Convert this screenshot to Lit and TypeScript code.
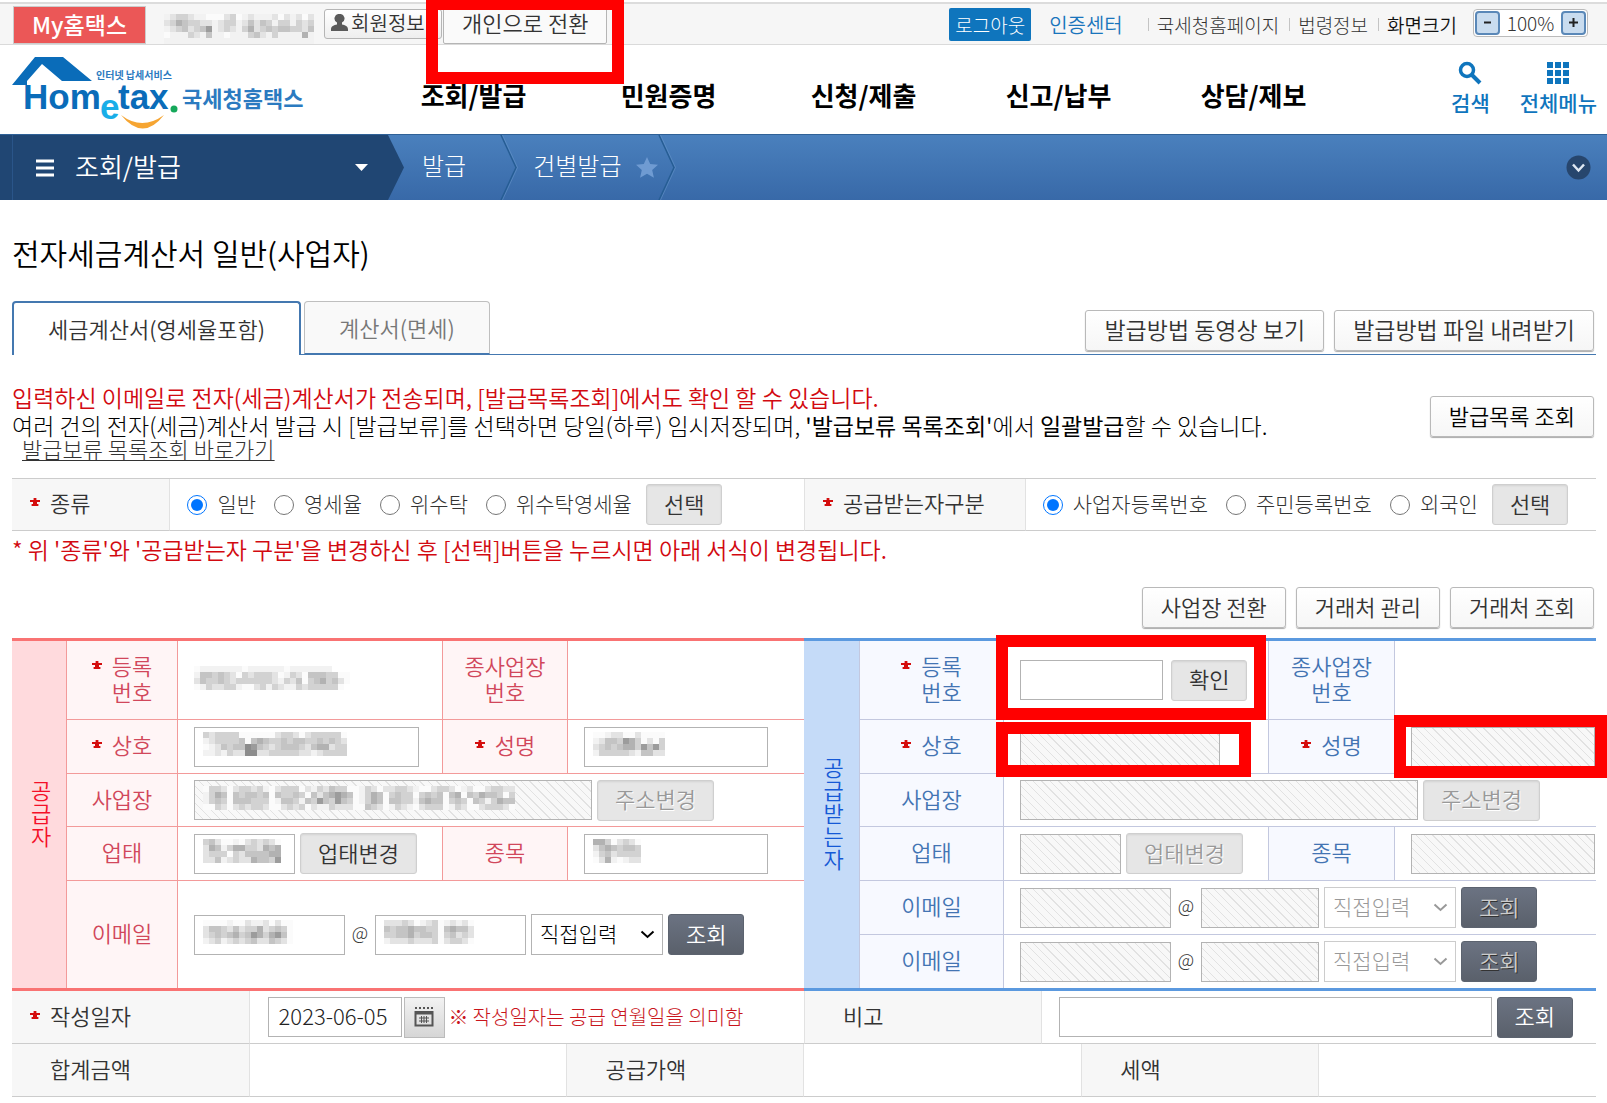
import { LitElement, html, svg, css, nothing, TemplateResult } from "lit";
import { customElement } from "lit/decorators.js";

/* Each digit is the darkness of one 6px cell; a space leaves the cell clear. */
const MASKS: Record<string, string[]> = {
  account: [
    "1233211000230121112021202",
    "2354332212331242431331323",
    "1234234612321352343443324",
    "0111321411011134213111151",
    "1111111111111111111111111",
  ],
  number: [
    "01111111011111101111111",
    "14434320323332013204443300",
    "24334323333332132403453420",
    "0132233100231321132333330",
  ],
  company: [
    "323333000000233202333330",
    "123333404543343443343432",
    "012434476432344432455233",
    "112132277223333322123333",
  ],
  address: [
    "0332023323102333021324330013202233210023320120023322",
    "1354043443404334304245654013540343303434045043544303",
    "1343044433301443143643643013540443314544034304313544",
    "0032023233200232302113222004320132102333013200233320",
  ],
  trade: ["3420010232320", "2541355332545", "2333032444455", "2241232254436"],
  owner: ["001220020000", "124436530203", "234345536463", "133333214422"],
  item: ["55302320", "24543443", "13423333", "02510122"],
  mail: ["000010021120200", "244324233523430", "234345346535640", "123123234224320"],
  domain: ["222320123012120", "434454433045442", "334453443034232", "122232223023320"],
};

const SHADES = ["#fbfbfb", "#f2f2f2", "#e3e3e3", "#d2d2d2", "#c4c4c4", "#b2b2b2", "#9c9c9c", "#8c8c8c"];

function mask(name: string): TemplateResult {
  const rows = MASKS[name];
  const width = Math.max(...rows.map((r) => r.length)) * 6;
  return html`<svg class="mask" width=${width} height=${rows.length * 6} aria-hidden="true" shape-rendering="crispEdges">
    ${rows.map((row, y) =>
      [...row].map((c, x) =>
        c === " " ? nothing : svg`<rect x=${x * 6} y=${y * 6} width="6" height="6" fill=${SHADES[Number(c)]}></rect>`
      )
    )}
  </svg>`;
}

const star = html`<svg class="star" width="10" height="9" viewBox="0 0 10 9" aria-hidden="true">
  <path d="M3.6 0h2.8v2H10v2H7v2h1.4v2H1.6V6H3V4H0V2h3.6z" fill="#d40d0d" />
</svg>`;

const chevron = html`<svg class="chevron" width="15" height="9" viewBox="0 0 15 9" aria-hidden="true">
  <path d="M1.5 1.5 7.5 7l6-5.5" fill="none" stroke="currentColor" stroke-width="2" />
</svg>`;

const label = (first: string, second = "", required = false) =>
  html`<span class="label">${required ? star : nothing}<span>${first}${second ? html`<br />${second}` : nothing}</span></span>`;

const field = (name: string, size: string, disabled = false, masked = "") => html`<span class="field ${size}">
  <input type="text" aria-label=${name} ?disabled=${disabled} />${masked ? mask(masked) : nothing}
</span>`;

const domainSelect = (name: string, disabled = false) => html`<span class="select">
  <select aria-label=${name} ?disabled=${disabled}>
    <option>직접입력</option>
  </select>${chevron}
</span>`;

@customElement("app-root")
export class AppRoot extends LitElement {
  static styles = css`
    :host {
      display: block;
      position: relative;
      overflow: hidden;
      background: #fff;
      color: #333;
      font-family: "Noto Sans CJK KR", "Noto Sans", sans-serif;
      font-size: 22px;
      font-weight: 300;
      line-height: 26px;
    }
    *,
    *::before {
      box-sizing: border-box;
    }
    a {
      color: inherit;
      text-decoration: none;
    }
    button,
    input,
    select {
      font: inherit;
      color: inherit;
      margin: 0;
    }
    button {
      white-space: nowrap;
    }
    svg {
      display: block;
      flex: none;
    }

    /* utility bar */
    .utility {
      display: flex;
      align-items: center;
      height: 45px;
      padding: 5px 19px 2px 13px;
      border-top: 2px solid #fff;
      border-bottom: 1px solid #dadada;
      background: #f6f6f6;
      box-shadow: inset 0 2px #dcdcdc;
      font-size: 19px;
    }
    .my {
      display: flex;
      align-items: center;
      height: 38px;
      padding: 0 18px 2px;
      border: 1px solid #ccc;
      background: #eb5757;
      color: #fff;
      font-size: 23px;
      font-weight: 500;
    }
    .account {
      width: 153px;
      margin: 14px 7px 0 18px;
    }
    .member {
      display: flex;
      align-items: center;
      gap: 3px;
      height: 30px;
      width: 118px;
      margin-top: -2px;
      padding: 0 6px 2px;
      border: 1px solid #b5b5b5;
      border-radius: 3px;
      background: linear-gradient(#fff, #eee);
      font-size: 20px;
      font-weight: 350;
    }
    .switch {
      position: relative;
      margin-left: 1px;
    }
    .switch button {
      height: 42px;
      margin-top: -4px;
      padding: 0 18px 2px;
      border: 1px solid #b5b5b5;
      border-radius: 2px;
      background: #fafafa;
      font-size: 22px;
      font-weight: 350;
    }
    .links {
      display: flex;
      align-items: center;
      margin-left: auto;
    }
    .logout {
      height: 33px;
      margin-right: 18px;
      padding: 0 6px;
      border: 0;
      border-radius: 2px;
      background: #0f75bd;
      color: #fff;
      font-size: 19px;
    }
    .cert {
      margin-right: 25px;
      color: #1a75bc;
      font-size: 20px;
      font-weight: 350;
    }
    .link {
      display: flex;
      align-items: center;
      padding-right: 10px;
    }
    .link::before {
      content: "";
      width: 1px;
      height: 13px;
      margin-right: 8px;
      background: #c4c4c4;
    }
    .strong {
      color: #111;
      font-weight: 350;
    }
    .zoom {
      display: flex;
      align-items: center;
      justify-content: space-between;
      width: 115px;
      height: 28px;
      margin: -4px 0 0 6px;
      padding: 1px;
      border: 1px solid #bbb;
      border-radius: 4px;
      background: #fff;
      font-size: 19px;
    }
    .zoom button {
      display: grid;
      place-items: center;
      width: 25px;
      height: 24px;
      padding: 0;
      border: 2px solid #5a88b8;
      border-radius: 4px;
      background: #c9dcef;
      color: #222;
    }

    /* header */
    .header {
      display: grid;
      grid-template-columns: 364px 975px 1fr;
      align-items: center;
      height: 89px;
      padding-left: 12px;
    }
    .brand {
      padding-top: 7px;
    }
    .nav {
      display: grid;
      grid-template-columns: repeat(5, 1fr);
      padding-top: 10px;
      color: #000;
      font-size: 26px;
      font-weight: 700;
      text-align: center;
    }
    .tools {
      display: flex;
      justify-content: flex-end;
      gap: 30px;
      padding: 0 10px 4px 0;
      color: #0f75bd;
      font-size: 21px;
      font-weight: 500;
    }
    .tools a {
      display: flex;
      flex-direction: column;
      align-items: center;
      gap: 4px;
    }

    /* location bar */
    .crumbs {
      display: flex;
      align-items: center;
      height: 66px;
      padding-right: 16px;
      background: linear-gradient(#4a80bd, #3869a8);
      border-top: 1px solid #2f6197;
      color: #fff;
    }
    .section {
      display: flex;
      align-items: center;
      width: 404px;
      height: 65px;
      padding: 0 36px;
      background: linear-gradient(90deg, #204673 12px, #2a5589 12px 13px, #204673 13px);
      clip-path: polygon(0 0, 388px 0, 100% 50%, 388px 100%, 0 100%);
      font-size: 26px;
      font-weight: 350;
    }
    .section span {
      margin: 0 auto 0 21px;
      padding-bottom: 4px;
    }
    .crumb {
      display: flex;
      align-items: center;
      gap: 14px;
      height: 65px;
      padding-left: 18px;
      font-size: 24px;
    }
    .crumb span {
      padding-bottom: 5px;
    }
    .crumb .arrow {
      margin-left: 20px;
    }
    .crumb.last {
      padding-left: 15px;
    }
    .crumb.last .arrow {
      margin-left: -14px;
    }
    .fold {
      margin-left: auto;
      padding: 0;
      border: 0;
      background: none;
    }

    /* page body */
    .page {
      padding: 32px 11px 6px 12px;
    }
    h1 {
      margin: 0;
      color: #000;
      font-size: 30px;
      font-weight: 350;
      line-height: 40px;
    }
    .tabs {
      display: flex;
      align-items: flex-end;
      gap: 3px;
      margin-top: 29px;
      border-bottom: 1px solid #4478b0;
      font-weight: 350;
    }
    .tab {
      height: 53px;
      padding: 0 34px 2px;
      border: 1px solid #bfbfbf;
      border-bottom: 1px solid #4478b0;
      border-radius: 4px 4px 0 0;
      background: #f9f9f9;
      color: #777;
    }
    .tab.on {
      height: 54px;
      margin-bottom: -1px;
      border: 2px solid #4478b0;
      border-bottom: 0;
      background: #fff;
      color: #333;
    }
    .actions {
      display: flex;
      justify-content: flex-end;
      gap: 10px;
      margin-left: auto;
      padding-right: 2px;
    }
    .tabs .actions {
      padding-bottom: 3px;
      font-size: 23px;
    }
    .action {
      height: 41px;
      padding: 0 18px 4px;
      border: 1px solid #b9b9b9;
      border-radius: 3px;
      background: linear-gradient(#fff, #f6f6f6);
      box-shadow: 0 1px 1px #aaa;
      font-weight: 350;
    }
    .notice {
      display: flex;
      justify-content: space-between;
      align-items: flex-start;
      margin-top: 28px;
      color: #000;
    }
    .notice p {
      margin: 0;
      font-size: 23px;
      line-height: 28px;
    }
    .notice .actions {
      padding-top: 13px;
    }
    .notice strong {
      font-weight: 400;
    }
    .notice .red,
    .red {
      color: #d20a11;
      font-size: 23px;
      font-weight: 350;
    }
    .shortcut {
      display: block;
      width: max-content;
      margin-left: 10px;
      color: #333;
      line-height: 18px;
      text-decoration: underline;
      text-decoration-thickness: 1px;
      text-underline-offset: 2px;
    }

    /* plain grey tables */
    table {
      width: 100%;
      border-collapse: separate;
      border-spacing: 0;
      table-layout: fixed;
    }
    th,
    td {
      padding: 0;
      font-weight: 300;
    }
    .plain th,
    .plain td {
      height: 53px;
      border-bottom: 1px solid #ccc;
    }
    .plain th {
      padding: 0 0 5px 38px;
      border-right: 1px solid #e2e2e2;
      background: #f7f7f7;
      font-weight: 350;
      text-align: left;
    }
    .plain th.req {
      padding: 0 0 0 18px;
    }
    .plain th.req .label {
      gap: 10px;
    }
    .plain td + th {
      border-left: 1px solid #e2e2e2;
    }
    .filter {
      margin-top: 21px;
      border-top: 1px solid #ccc;
    }
    .filter th,
    .filter td {
      height: 52px;
    }
    .choices {
      display: flex;
      align-items: center;
      padding-left: 17px;
      font-size: 21px;
    }
    .choices label {
      display: flex;
      align-items: center;
      gap: 10px;
      margin-right: 18px;
      white-space: nowrap;
    }
    .choices label span {
      padding-bottom: 4px;
    }
    .choices input {
      width: 20px;
      height: 20px;
      accent-color: #0075ff;
    }
    .choices .grey {
      margin-left: -4px;
    }
    .hint {
      margin: 5px 0 0;
    }
    .hint + .actions {
      margin-top: 25px;
      margin-bottom: 10px;
    }

    .label {
      display: flex;
      justify-content: center;
      gap: 10px;
      padding-bottom: 5px;
    }
    .req .label {
      justify-content: flex-start;
    }
    .star {
      margin-top: 9px;
    }

    /* the two parties */
    .parties {
      display: grid;
      grid-template-columns: 1fr 1fr;
    }
    .party {
      border-top: 3px solid var(--edge);
      border-bottom: 3px solid var(--edge);
    }
    .party th {
      border-right: 1px solid var(--line);
      border-bottom: 1px solid var(--line);
      background: var(--soft);
      color: var(--ink);
      font-weight: 350;
    }
    .party td {
      position: relative;
      height: 54px;
      padding-left: 16px;
      border-bottom: 1px solid var(--line);
    }
    .party .split {
      border-right: 1px solid var(--line);
    }
    .party .tall td {
      height: 79px;
    }
    .party .short td {
      height: 53px;
    }
    .party .double td {
      height: 107px;
    }
    .party th.side {
      padding: 0 0 4px 4px;
      background: var(--side);
      color: var(--sideink);
      line-height: 23px;
    }
    .party th.side,
    .party .end th,
    .party .end td {
      border-bottom: 0;
    }
    .side span {
      display: block;
    }
    .supplier {
      --edge: #f97373;
      --line: #f39a9a;
      --soft: #fff5f6;
      --ink: #d1475b;
      --side: #ffdadd;
      --sideink: #f40f28;
    }
    .receiver {
      --edge: #5b99df;
      --line: #c3c8df;
      --soft: #f7f9ff;
      --ink: #4374b3;
      --side: #c5dbf8;
      --sideink: #1559d6;
    }
    .c-side {
      width: 55px;
    }
    .receiver .c-side {
      width: 56px;
    }
    .c-name {
      width: 111px;
    }
    .receiver .c-name {
      width: 144px;
    }
    .c-main {
      width: 265px;
    }
    .c-sub {
      width: 125px;
    }
    .receiver .c-sub {
      width: 126px;
    }

    .row {
      display: flex;
      align-items: center;
      gap: 5px;
    }
    .row.wide {
      gap: 8px;
    }
    .at {
      width: 20px;
      padding-bottom: 5px;
      font-size: 18px;
      text-align: center;
    }
    .field {
      display: grid;
      align-items: center;
      flex: none;
    }
    .field > * {
      grid-area: 1 / 1;
    }
    .field input {
      width: 100%;
      height: 40px;
      padding: 0 10px 4px;
      border: 1px solid #b3b3b3;
      border-radius: 0;
      background: #fff;
    }
    .field input:disabled {
      background: repeating-linear-gradient(45deg, #f8f8f8 0 5px, #e2e2e2 5px 6px);
    }
    .mask {
      margin-bottom: 5px;
    }
    .field .mask {
      margin-left: 9px;
      pointer-events: none;
    }
    .w-100 {
      width: 101px;
    }
    .w-118 {
      width: 118px;
    }
    .w-143 {
      width: 143px;
    }
    .w-151 {
      width: 151px;
    }
    .w-184 {
      width: 184px;
    }
    .w-200 {
      width: 200px;
    }
    .w-225 {
      width: 225px;
    }
    .w-398 {
      width: 398px;
    }
    .grey,
    .dark {
      height: 41px;
      padding: 0 17px 4px;
      border: 1px solid #cfcfcf;
      border-radius: 3px;
      background: #e6e6e6;
      box-shadow: inset 0 1px 2px #d2d2d2;
      font-size: 22px;
      font-weight: 350;
    }
    .grey:disabled {
      color: #999;
      text-shadow: 1px 1px #fff;
    }
    .dark {
      border-color: #5c636f;
      background: linear-gradient(#6b7382, #5a606b);
      box-shadow: none;
      color: #fff;
    }
    .dark:disabled {
      color: #ccc;
      text-shadow: 1px 1px #333;
    }
    .select {
      display: grid;
      align-items: center;
      width: 132px;
      color: #000;
      font-size: 21px;
    }
    .select > * {
      grid-area: 1 / 1;
    }
    .select select {
      width: 100%;
      height: 41px;
      padding: 0 8px 4px;
      border: 1px solid #b3b3b3;
      border-radius: 0;
      appearance: none;
      background: #fff;
      opacity: 1;
    }
    .select .chevron {
      justify-self: end;
      margin-right: 8px;
      pointer-events: none;
    }
    .select:has(:disabled) {
      color: #999;
    }
    .select select:disabled {
      border-color: #ccc;
    }

    /* highlight frames laid over the form */
    .frame {
      position: absolute;
      z-index: 2;
      border: 12px solid #f00;
      pointer-events: none;
    }
    .f-switch {
      top: -8px;
      left: -17px;
      width: 198px;
      height: 86px;
    }
    .f-number {
      top: -6px;
      left: -8px;
      width: 270px;
      height: 85px;
    }
    .f-company {
      top: 2px;
      left: -8px;
      width: 255px;
      height: 55px;
    }
    .f-owner {
      top: -5px;
      left: -1px;
      width: 213px;
      height: 63px;
    }

    .calendar {
      display: grid;
      place-items: center;
      width: 41px;
      height: 41px;
      padding: 0;
      border: 1px solid #bbb;
      background: linear-gradient(#f2f2f2, #d6d6d6);
    }
    .date {
      gap: 2px;
      padding-left: 18px;
    }
    .date .field {
      width: 134px;
    }
    .date .field input {
      color: #222;
    }
    .meaning {
      display: flex;
      gap: 4px;
      margin-left: 2px;
      color: #c9151c;
      font-size: 20px;
      white-space: nowrap;
    }
    .remark {
      padding: 0 23px 0 17px;
    }
    .remark .field {
      flex: 1;
    }
  `;

  private choice(group: string, text: string, checked = false) {
    return html`<label><input type="radio" name=${group} .checked=${checked} /><span>${text}</span></label>`;
  }

  private mailRow(end: boolean) {
    return html`<tr class=${end ? "short end" : ""}>
      <th scope="row">${label("이메일")}</th>
      <td colspan="3">
        <div class="row">
          ${field("이메일 아이디", "w-151", true)}<span class="at">@</span> ${field("이메일 도메인", "w-118", true)}
          ${domainSelect("도메인 선택", true)}
          <button class="dark" disabled>조회</button>
        </div>
      </td>
    </tr>`;
  }

  private crumbArrow() {
    return html`<svg class="arrow" width="18" height="65" viewBox="0 0 18 65" aria-hidden="true">
      <path d="M1 0 16 32.5 1 65" fill="none" stroke="#265d94" stroke-width="1.5" />
      <path d="M2.5 0 17.5 32.5 2.5 65" fill="none" stroke="#6b9ace" stroke-width="1" opacity=".5" />
    </svg>`;
  }

  private logo() {
    return html`<svg width="296" height="72" viewBox="0 0 296 72" role="img" aria-label="국세청홈택스">
      <path d="M0 28 23 0h28l29 24H50L30 7 15 24v4z" fill="#0a6cb9" />
      <g font-family="Liberation Sans, sans-serif" font-weight="700" font-size="35">
        <text x="11" y="52" fill="#0a6cb9">Hom</text>
        <text x="88" y="62" fill="#19aee8">e</text>
        <text x="106" y="52" fill="#0a6cb9">tax</text>
      </g>
      <circle cx="162" cy="52" r="3.5" fill="#15a85a" />
      <path d="M109 58q21 16 43 0q-21 27-43 0z" fill="#f6a532" />
      <g font-family="Noto Sans CJK KR, sans-serif" fill="#2b7ac0" font-weight="700">
        <text x="84" y="22" font-size="10">인터넷 납세서비스</text>
        <text x="170" y="50" font-size="22">국세청홈택스</text>
      </g>
    </svg>`;
  }

  render() {
    return html`
      <div class="utility">
        <a class="my" href="#">My홈택스</a>
        <span class="account">${mask("account")}</span>
        <button class="member">
          <svg width="17" height="18" viewBox="0 0 17 18" aria-hidden="true">
            <path d="M8.500 0a4.500 4.500 0 0 1 2.500 8.500v2c3 .6 6 1.500 6 5V17H0v-1.500c0-3.500 3-4.400 6-5v-2A4.500 4.500 0 0 1 8.500 0z" fill="#5a5a5a" />
          </svg>
          회원정보
        </button>
        <span class="switch"><button>개인으로 전환</button><span class="frame f-switch"></span></span>
        <div class="links">
          <button class="logout">로그아웃</button>
          <a class="cert" href="#">인증센터</a>
          <a class="link" href="#">국세청홈페이지</a>
          <a class="link" href="#">법령정보</a>
          <span class="link strong">화면크기</span>
          <span class="zoom">
            <button aria-label="축소"><svg width="11" height="11"><path d="M2 5.500h7" stroke="currentColor" stroke-width="2" /></svg></button>
            100%
            <button aria-label="확대"><svg width="11" height="11"><path d="M1 5.500h9M5.500 1v9" stroke="currentColor" stroke-width="2" /></svg></button>
          </span>
        </div>
      </div>

      <header class="header">
        <a class="brand" href="#">${this.logo()}</a>
        <nav class="nav">
          ${["조회/발급", "민원증명", "신청/제출", "신고/납부", "상담/제보"].map((t) => html`<a href="#">${t}</a>`)}
        </nav>
        <div class="tools">
          <a href="#">
            <svg width="24" height="24" viewBox="0 0 24 24" aria-hidden="true">
              <circle cx="9" cy="9" r="6.500" fill="none" stroke="currentColor" stroke-width="3.500" />
              <path d="m13.500 13.500 8.500 8.500" stroke="currentColor" stroke-width="4" />
            </svg>
            검색
          </a>
          <a href="#">
            <svg width="24" height="24" viewBox="0 0 24 24" fill="currentColor" aria-hidden="true">
              ${[1, 9, 17].map((y) => [1, 9, 17].map((x) => svg`<rect x=${x} y=${y} width="6" height="6"></rect>`))}
            </svg>
            전체메뉴
          </a>
        </div>
      </header>

      <div class="crumbs">
        <div class="section">
          <svg width="18" height="18" aria-hidden="true"><path d="M0 2h18M0 9h18M0 16h18" stroke="#fff" stroke-width="3" /></svg>
          <span>조회/발급</span>
          <svg width="13" height="7" aria-hidden="true"><path d="M0 0h13L6.500 7z" fill="#fff" /></svg>
        </div>
        <div class="crumb"><span>발급</span>${this.crumbArrow()}</div>
        <div class="crumb last">
          <span>건별발급</span>
          <svg width="22" height="21" viewBox="0 0 22 21" aria-hidden="true">
            <path d="m11 0 3.200 7 7.800.8-5.800 5.200 1.700 7.800L11 16.800l-6.900 4 1.700-7.800L0 7.800 7.800 7z" fill="#6f9bd2" />
          </svg>
          ${this.crumbArrow()}
        </div>
        <button class="fold" aria-label="펼치기">
          <svg width="25" height="25" viewBox="0 0 25 25">
            <circle cx="12.500" cy="12.500" r="12" fill="#27466d" />
            <path d="m7 9.500 5.500 6 5.500-6" fill="none" stroke="#dfe8f2" stroke-width="2.500" />
          </svg>
        </button>
      </div>

      <main class="page">
        <h1>전자세금계산서 일반(사업자)</h1>

        <div class="tabs">
          <button class="tab on">세금계산서(영세율포함)</button>
          <button class="tab">계산서(면세)</button>
          <div class="actions">
            <button class="action">발급방법 동영상 보기</button>
            <button class="action">발급방법 파일 내려받기</button>
          </div>
        </div>

        <div class="notice">
          <div>
            <p class="red">입력하신 이메일로 전자(세금)계산서가 전송되며, [발급목록조회]에서도 확인 할 수 있습니다.</p>
            <p>
              여러 건의 전자(세금)계산서 발급 시 [발급보류]를 선택하면 당일(하루) 임시저장되며,
              <strong>'발급보류 목록조회'</strong>에서 <strong>일괄발급</strong>할 수 있습니다.
            </p>
            <a class="shortcut" href="#">발급보류 목록조회 바로가기</a>
          </div>
          <div class="actions"><button class="action">발급목록 조회</button></div>
        </div>

        <table class="plain filter">
          <colgroup>
            <col style="width:10%" />
            <col style="width:40%" />
            <col style="width:14%" />
            <col />
          </colgroup>
          <tr>
            <th class="req" scope="row">${label("종류", "", true)}</th>
            <td>
              <div class="choices">
                ${this.choice("kind", "일반", true)} ${this.choice("kind", "영세율")} ${this.choice("kind", "위수탁")}
                ${this.choice("kind", "위수탁영세율")}
                <button class="grey">선택</button>
              </div>
            </td>
            <th class="req" scope="row">${label("공급받는자구분", "", true)}</th>
            <td>
              <div class="choices">
                ${this.choice("buyer", "사업자등록번호", true)} ${this.choice("buyer", "주민등록번호")}
                ${this.choice("buyer", "외국인")}
                <button class="grey">선택</button>
              </div>
            </td>
          </tr>
        </table>

        <p class="red hint">* 위 '종류'와 '공급받는자 구분'을 변경하신 후 [선택]버튼을 누르시면 아래 서식이 변경됩니다.</p>
        <div class="actions">
          <button class="action">사업장 전환</button>
          <button class="action">거래처 관리</button>
          <button class="action">거래처 조회</button>
        </div>

        <div class="parties">
          <table class="party supplier">
            <colgroup>
              <col class="c-side" />
              <col class="c-name" />
              <col class="c-main" />
              <col class="c-sub" />
              <col />
            </colgroup>
            <tr class="tall">
              <th class="side" rowspan="5">${[..."공급자"].map((c) => html`<span>${c}</span>`)}</th>
              <th scope="row">${label("등록", "번호", true)}</th>
              <td class="split">${mask("number")}</td>
              <th scope="row">${label("종사업장", "번호")}</th>
              <td></td>
            </tr>
            <tr>
              <th scope="row">${label("상호", "", true)}</th>
              <td class="split">${field("상호", "w-225", false, "company")}</td>
              <th scope="row">${label("성명", "", true)}</th>
              <td>${field("성명", "w-184", false, "owner")}</td>
            </tr>
            <tr class="short">
              <th scope="row">${label("사업장")}</th>
              <td colspan="3">
                <div class="row">${field("사업장", "w-398", true, "address")}<button class="grey" disabled>주소변경</button></div>
              </td>
            </tr>
            <tr>
              <th scope="row">${label("업태")}</th>
              <td class="split">
                <div class="row">${field("업태", "w-100", false, "trade")}<button class="grey">업태변경</button></div>
              </td>
              <th scope="row">${label("종목")}</th>
              <td>${field("종목", "w-184", false, "item")}</td>
            </tr>
            <tr class="double end">
              <th scope="row">${label("이메일")}</th>
              <td colspan="3">
                <div class="row">
                  ${field("이메일 아이디", "w-151", false, "mail")}<span class="at">@</span>
                  ${field("이메일 도메인", "w-151", false, "domain")} ${domainSelect("도메인 선택")}
                  <button class="dark">조회</button>
                </div>
              </td>
            </tr>
          </table>

          <table class="party receiver">
            <colgroup>
              <col class="c-side" />
              <col class="c-name" />
              <col class="c-main" />
              <col class="c-sub" />
              <col />
            </colgroup>
            <tr class="tall">
              <th class="side" rowspan="6">${[..."공급받는자"].map((c) => html`<span>${c}</span>`)}</th>
              <th scope="row">${label("등록", "번호", true)}</th>
              <td class="split">
                <div class="row wide">${field("등록번호", "w-143")}<button class="grey">확인</button></div>
                <span class="frame f-number"></span>
              </td>
              <th scope="row">${label("종사업장", "번호")}</th>
              <td></td>
            </tr>
            <tr>
              <th scope="row">${label("상호", "", true)}</th>
              <td class="split">${field("상호", "w-200", true)}<span class="frame f-company"></span></td>
              <th scope="row">${label("성명", "", true)}</th>
              <td>${field("성명", "w-184", true)}<span class="frame f-owner"></span></td>
            </tr>
            <tr class="short">
              <th scope="row">${label("사업장")}</th>
              <td colspan="3">
                <div class="row">${field("사업장", "w-398", true)}<button class="grey" disabled>주소변경</button></div>
              </td>
            </tr>
            <tr>
              <th scope="row">${label("업태")}</th>
              <td class="split">
                <div class="row">${field("업태", "w-100", true)}<button class="grey" disabled>업태변경</button></div>
              </td>
              <th scope="row">${label("종목")}</th>
              <td>${field("종목", "w-184", true)}</td>
            </tr>
            ${this.mailRow(false)} ${this.mailRow(true)}
          </table>
        </div>

        <table class="plain totals">
          <colgroup>
            <col style="width:15%" />
            <col style="width:20%" />
            <col style="width:15%" />
            <col style="width:15%" />
            <col style="width:2.500%" />
            <col style="width:15%" />
            <col />
          </colgroup>
          <tr>
            <th class="req" scope="row">${label("작성일자", "", true)}</th>
            <td colspan="2">
              <div class="row date">
                <span class="field"><input type="text" aria-label="작성일자" .value=${"2023-06-05"} /></span>
                <button class="calendar" aria-label="달력">
                  <svg width="20" height="20" viewBox="0 0 20 20" fill="none" stroke="#555">
                    <path d="M1 1h18" stroke-width="2" stroke-dasharray="2 2" />
                    <path d="M1.500 5h17v13.500h-17z" stroke-width="2" />
                    <path d="M1 6h18" stroke-width="3" />
                    <path d="M5 11h10M5 14h10M7.500 9v7M10 9v7M12.500 9v7" />
                  </svg>
                </button>
                <span class="meaning"><span>※</span><span>작성일자는 공급 연월일을 의미함</span></span>
              </div>
            </td>
            <th scope="row">비고</th>
            <td colspan="3">
              <div class="row remark">${field("비고", "")}<button class="dark">조회</button></div>
            </td>
          </tr>
          <tr>
            <th scope="row">합계금액</th>
            <td></td>
            <th scope="row">공급가액</th>
            <td colspan="2"></td>
            <th scope="row">세액</th>
            <td></td>
          </tr>
        </table>
      </main>
    `;
  }
}
